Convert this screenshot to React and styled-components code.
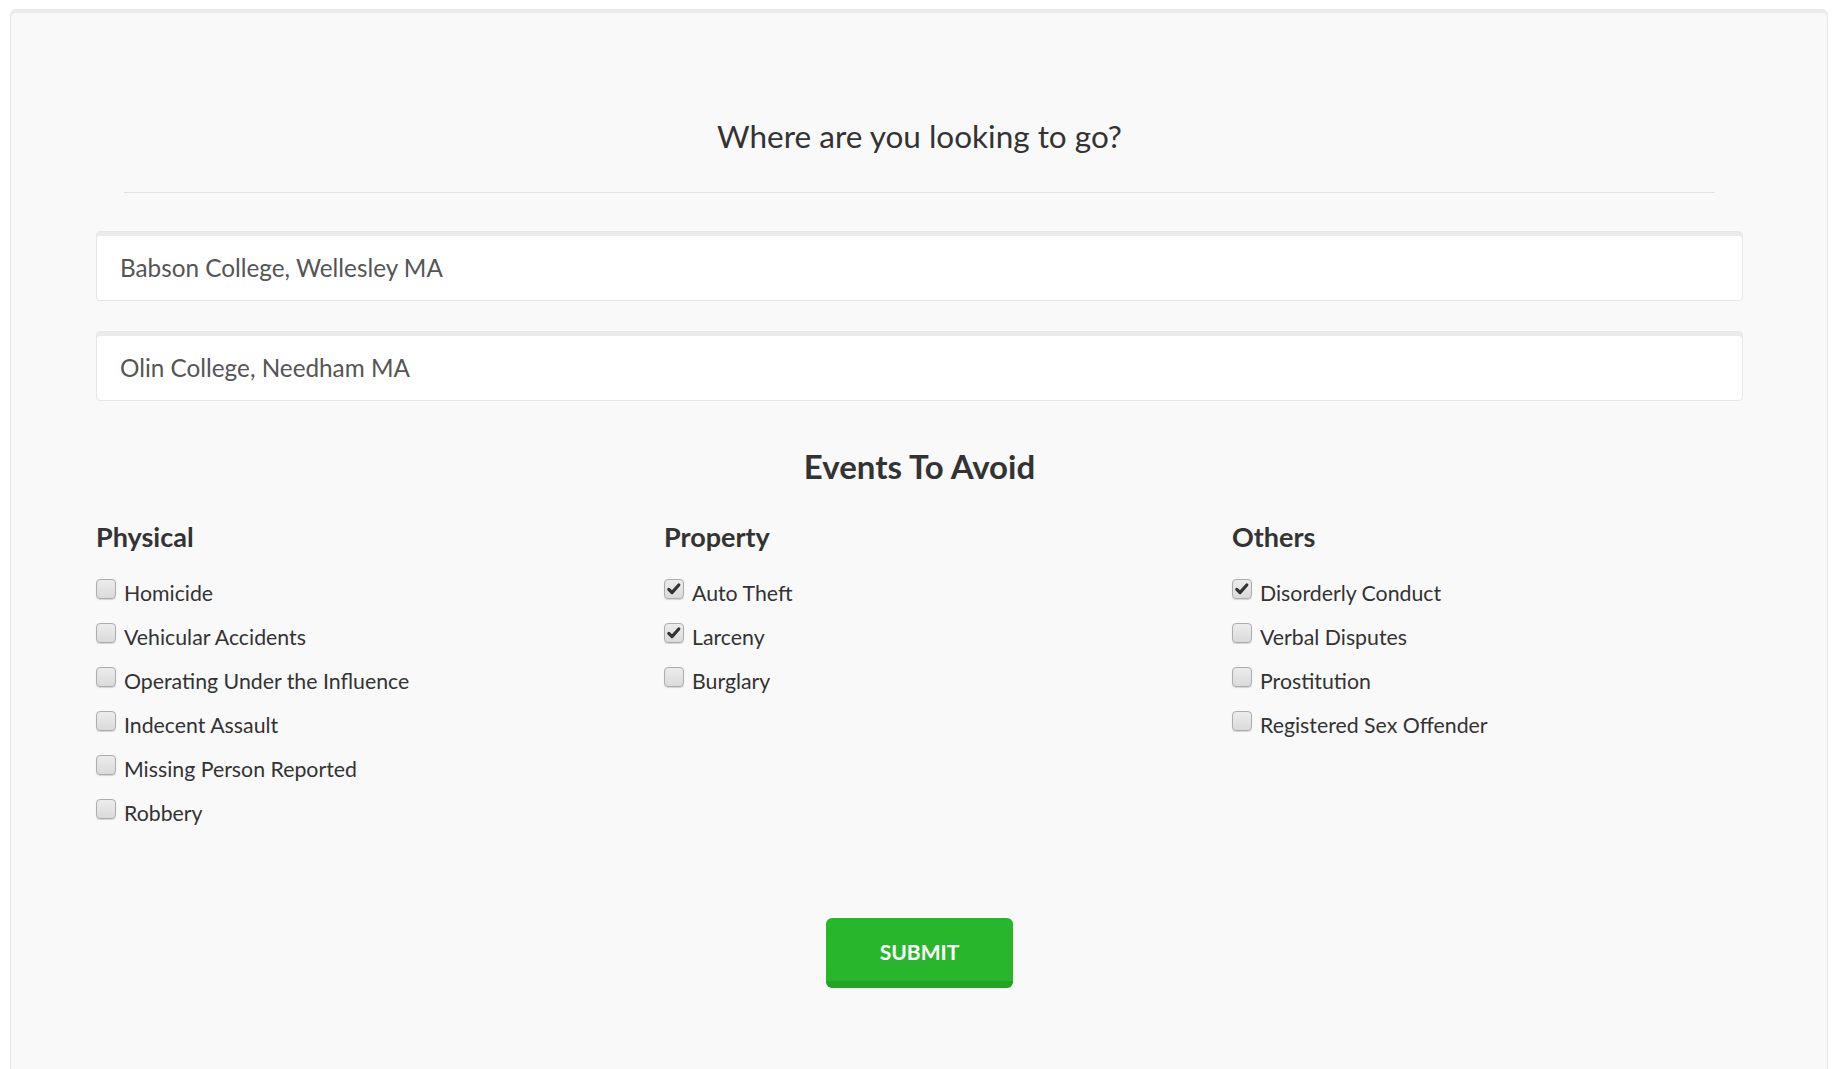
import styled, { createGlobalStyle } from "styled-components";

const GlobalStyle = createGlobalStyle`
    body {
        margin: 0;
        background-color: white;
        font-family: "Lato", "Open Sans", sans-serif;
        color: #333;
    }
`

const Page = styled.div`
    padding: 9px 4px 0 10px;
`

const Well = styled.div`
    background-color: #f9f9f9;
    border: 1px solid #e7e7e7;
    border-radius: 6px;
    box-shadow: inset 0 3px 0 #ebebeb;
    padding: 0 84px 0 85px;
    min-height: 1100px;
`

const Title = styled.h2`
    margin: 106px 0 0 0;
    font-size: 31.5px;
    line-height: 41px;
    font-weight: 400;
    text-align: center;
    color: #333;
`

const Divider = styled.hr`
    margin: 35px 28px 0 28px;
    border: 0;
    border-top: 1px solid #e2e2e2;
`

const Field = styled.input`
    display: block;
    box-sizing: border-box;
    width: 100%;
    height: 70px;
    margin-top: ${(props) => props.$top};
    padding: 2px 23px 0 23px;
    border: 1px solid #e7e7e7;
    border-radius: 4px;
    box-shadow: inset 0 4px 0 #ebebeb;
    background-color: white;
    font-family: inherit;
    font-size: 24.3px;
    color: #555;
    outline: none;
`

const Subtitle = styled.h3`
    margin: 46px 0 0 0;
    font-size: 33px;
    line-height: 38px;
    font-weight: 700;
    text-align: center;
    color: #333;
`

const Columns = styled.div`
    display: grid;
    grid-template-columns: repeat(3, 568px);
    margin-top: 36px;
`

const Column = styled.div`
    display: flex;
    flex-direction: column;
`

const ColumnTitle = styled.h4`
    margin: 0 0 19px 0;
    font-size: 27px;
    line-height: 31px;
    font-weight: 700;
    color: #333;
`

const Option = styled.label`
    display: flex;
    align-items: center;
    height: 44px;
    gap: 8px;
    font-size: 21.3px;
    color: #333;
    cursor: pointer;
`

const Box = styled.input`
    appearance: none;
    box-sizing: border-box;
    width: 20px;
    height: 20px;
    margin: 0 0 8px 0;
    border: 1px solid #adadad;
    border-radius: 4px;
    background: linear-gradient(#ececec, #dadada);
    box-shadow: 0 1px 1px rgba(0, 0, 0, 0.15);
    cursor: pointer;
    &:checked {
        background:
            url("data:image/svg+xml,%3Csvg xmlns='http://www.w3.org/2000/svg' viewBox='0 0 20 20'%3E%3Cpath d='M3.5 10.5 L7.5 14.5 L16 5' fill='none' stroke='%23333' stroke-width='4' stroke-linecap='round' stroke-linejoin='round'/%3E%3C/svg%3E") center / 16px 16px no-repeat,
            linear-gradient(#ececec, #dadada);
    }
`

const Actions = styled.div`
    display: flex;
    justify-content: center;
    margin-top: 83px;
`

const Submit = styled.button`
    width: 187px;
    height: 70px;
    border: 0;
    border-bottom: 7px solid #22a427;
    border-radius: 6px;
    background-color: #28b62c;
    color: white;
    font-family: inherit;
    font-size: 21px;
    font-weight: 700;
    text-transform: uppercase;
    padding-top: 5px;
    cursor: pointer;
    &:hover {
        background-color: #23a127;
    }
`

const groups = [
    {
        title: "Physical",
        items: [
            ["Homicide", false],
            ["Vehicular Accidents", false],
            ["Operating Under the Influence", false],
            ["Indecent Assault", false],
            ["Missing Person Reported", false],
            ["Robbery", false],
        ],
    },
    {
        title: "Property",
        items: [
            ["Auto Theft", true],
            ["Larceny", true],
            ["Burglary", false],
        ],
    },
    {
        title: "Others",
        items: [
            ["Disorderly Conduct", true],
            ["Verbal Disputes", false],
            ["Prostitution", false],
            ["Registered Sex Offender", false],
        ],
    },
]

const App = () => {
    return (
        <Page>
            <GlobalStyle />
            <Well>
                <Title>Where are you looking to go?</Title>
                <Divider />
                <Field $top="38px" defaultValue="Babson College, Wellesley MA" />
                <Field $top="30px" defaultValue="Olin College, Needham MA" />
                <Subtitle>Events To Avoid</Subtitle>
                <Columns>
                    {groups.map((g) => (
                        <Column key={g.title}>
                            <ColumnTitle>{g.title}</ColumnTitle>
                            {g.items.map(([name, on]) => (
                                <Option key={name}>
                                    <Box type="checkbox" defaultChecked={on} />
                                    {name}
                                </Option>
                            ))}
                        </Column>
                    ))}
                </Columns>
                <Actions>
                    <Submit>Submit</Submit>
                </Actions>
            </Well>
        </Page>
    )
}

export default App
